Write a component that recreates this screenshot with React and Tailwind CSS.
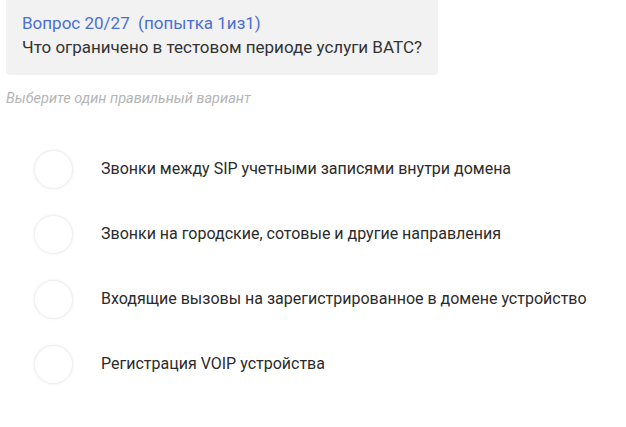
import React from "react";

const options = [
  "Звонки между SIP учетными записями внутри домена",
  "Звонки на городские, сотовые и другие направления",
  "Входящие вызовы на зарегистрированное в домене устройство",
  "Регистрация VOIP устройства",
];

export default function App() {
  return (
    <div className="w-[626px] h-[427px] bg-white font-['Roboto',sans-serif] overflow-hidden">
      <div className="ml-[6px] w-[432px] h-[75px] bg-[#f2f2f2] rounded-b-[4px] pl-[16px] pt-[12px]">
        <div className="text-[17px] leading-[22px] text-[#4a6fd4]">
          Вопрос 20/27&nbsp; (попытка 1из1)
        </div>
        <div className="text-[17px] leading-[26px] text-[#333333]">
          Что ограничено в тестовом периоде услуги ВАТС?
        </div>
      </div>
      <div className="ml-[6px] mt-[14px] text-[14.5px] leading-[20px] italic text-[#b5b5b5]">
        Выберите один правильный вариант
      </div>
      <div className="mt-[41px] flex flex-col gap-[27px] pl-[34px]">
        {options.map((o) => (
          <div key={o} className="flex items-center h-[38px]">
            <div className="w-[39px] h-[39px] rounded-full bg-white border border-[#f0f0f0] shadow-[0_0_3px_rgba(0,0,0,0.08)] shrink-0" />
            <div className="ml-[28px] text-[16px] text-[#2b2b2b]">{o}</div>
          </div>
        ))}
      </div>
    </div>
  );
}
